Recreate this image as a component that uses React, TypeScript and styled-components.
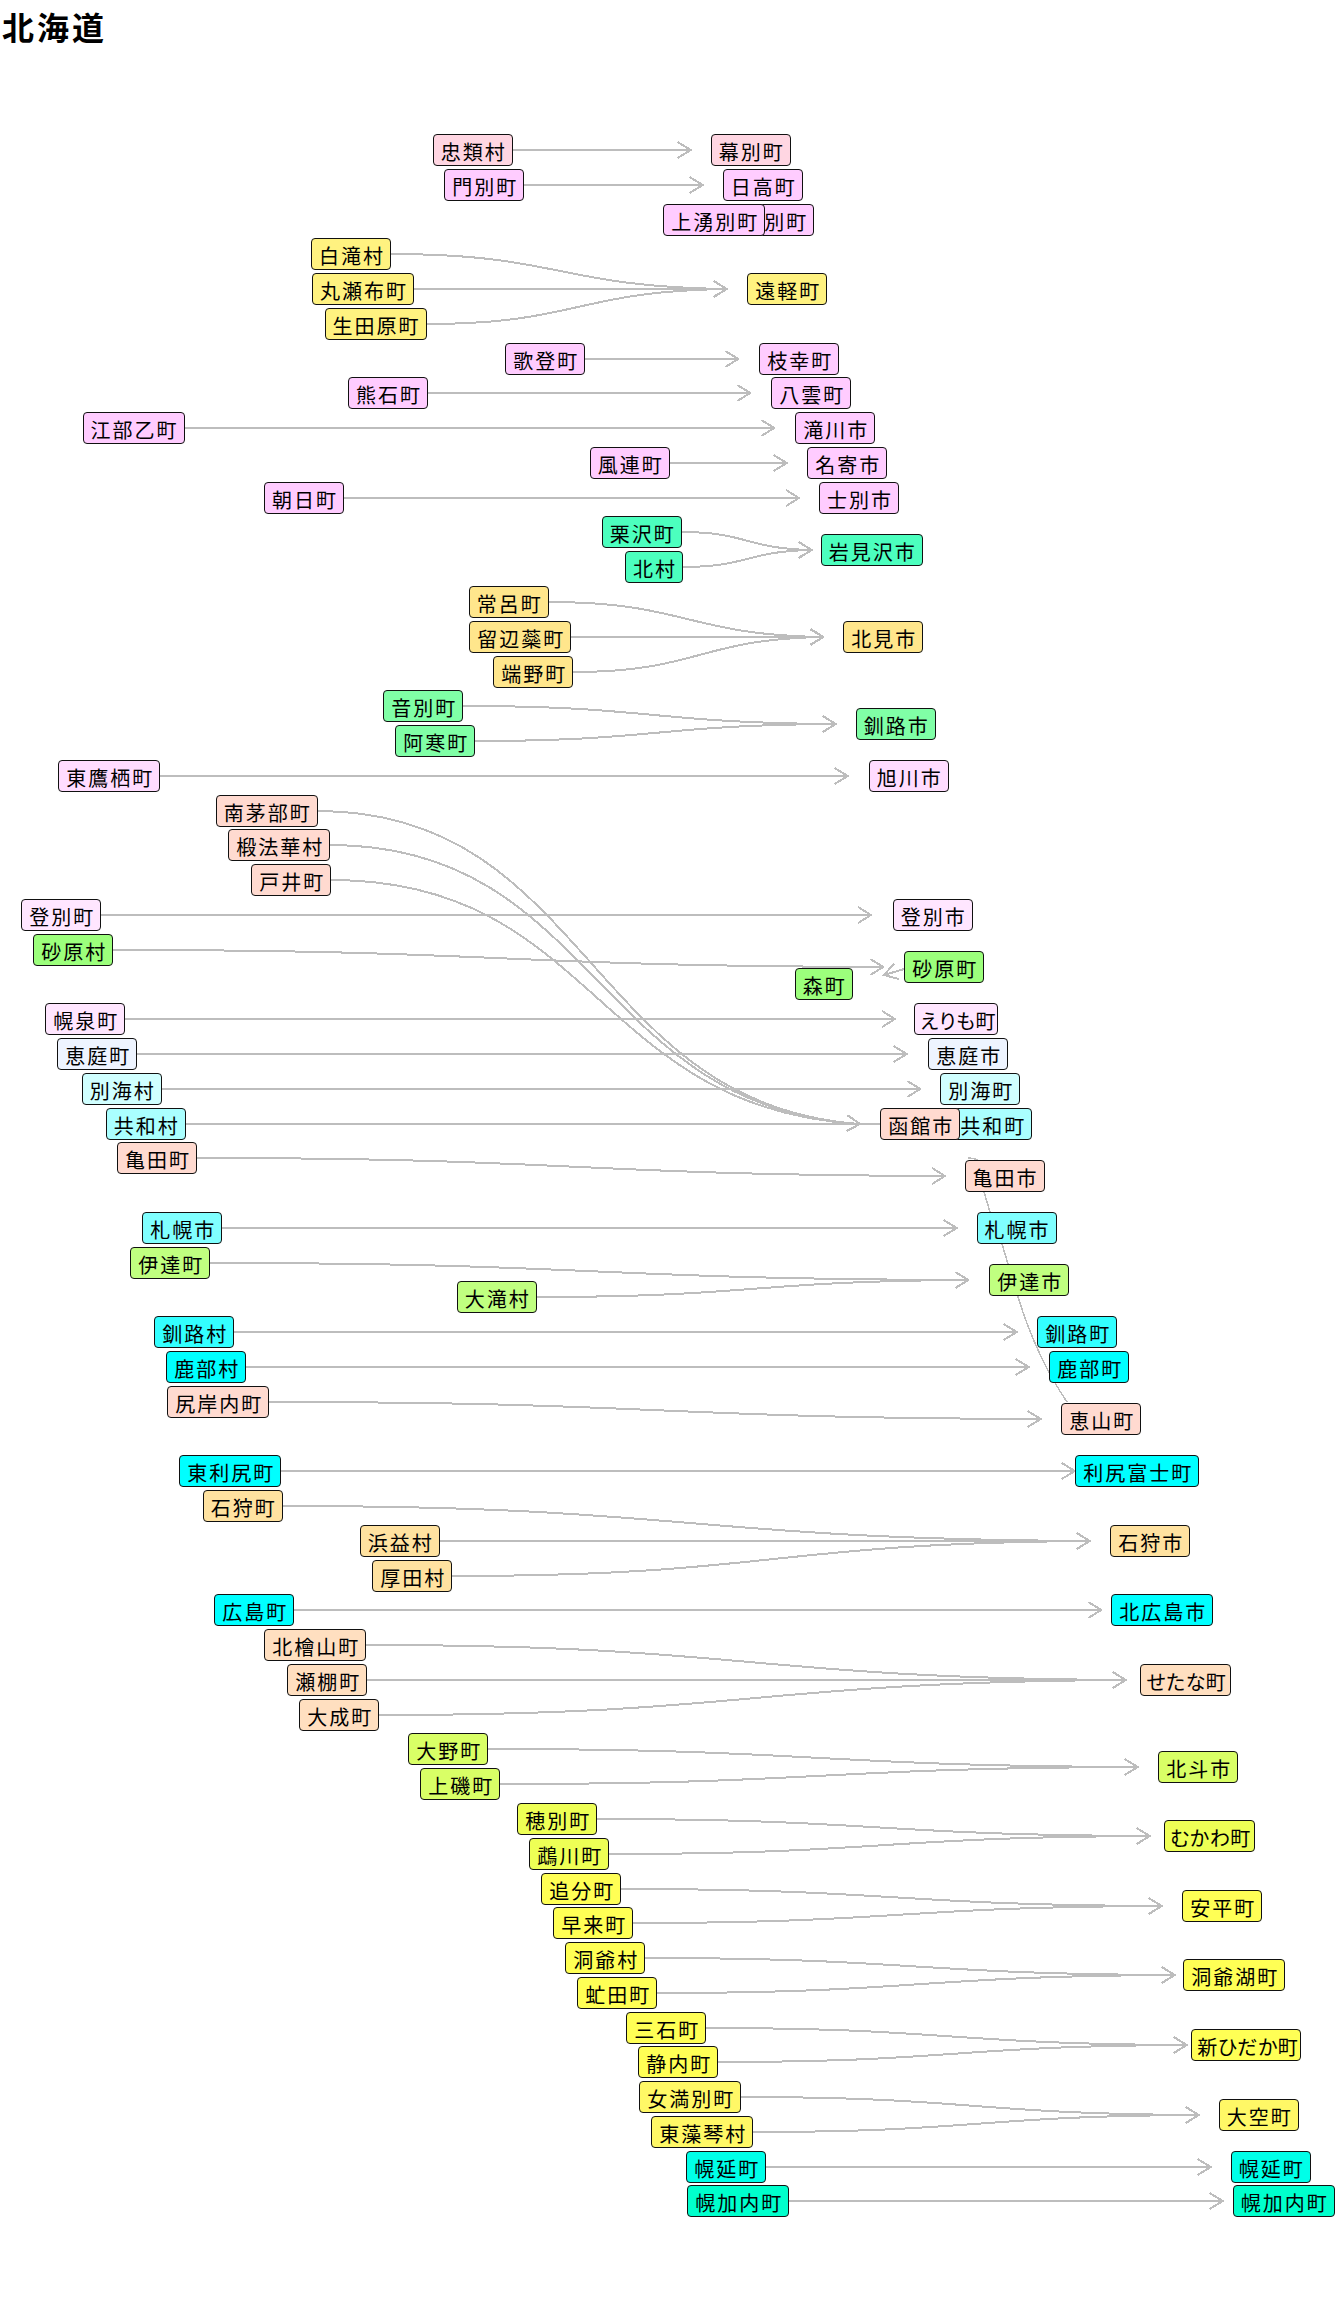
import React from 'react';
import styled, { createGlobalStyle } from 'styled-components';

const GlobalStyle = createGlobalStyle`
  html, body { margin: 0; padding: 0; background: #ffffff; }
  body { font-family: "Noto Sans CJK JP", "Noto Sans", sans-serif; }
`;

const ROW0 = 134;
const PITCH = 34.77;
const HEAD = 47;
const BOX_H = 32;

const C = {
  PINK: '#ffd6e2',
  MAG: '#ffccff',
  YEL1: '#fff280',
  GRN1: '#4cffbe',
  YEL2: '#ffe68c',
  GRN2: '#80ffa6',
  LAV: '#ffdcff',
  SAL: '#ffdad0',
  LAV2: '#ffe6ff',
  LGRN: '#9cff7c',
  ICE: '#eef4ff',
  LCY: '#d0ffff',
  CY2: '#aaffff',
  CY3: '#80ffff',
  YG: '#c0ff80',
  CY4: '#33ffff',
  CY: '#00ffff',
  TAN: '#ffe2a0',
  PEACH: '#ffdfc0',
  YG2: '#d9ff66',
  YG3: '#eeff55',
  YEL3: '#ffff55',
  YEL4: '#fff866',
  TEAL1: '#00ffe8',
  TEAL2: '#00ffcc',
};

type NodeDef = {
  id: string;
  label: string;
  x: number;
  row: number;
  color: string;
  w?: number;
  gap?: number;
  kana?: boolean;
};

const nodes: NodeDef[] = [
  { id: 'a1', label: '忠類村', x: 432.7, row: 0, color: C.PINK },
  { id: 'b1', label: '幕別町', x: 710.7, row: 0, color: C.PINK },
  { id: 'a2', label: '門別町', x: 444.3, row: 1, color: C.MAG },
  { id: 'b2', label: '日高町', x: 722.7, row: 1, color: C.MAG },
  { id: 'b3', label: '湧別町', x: 734.3, row: 2, color: C.MAG },
  { id: 'b3u', label: '上湧別町', x: 663.3, row: 2, color: C.MAG },
  { id: 'a4', label: '白滝村', x: 311, row: 3, color: C.YEL1 },
  { id: 'a5', label: '丸瀬布町', x: 312, row: 4, color: C.YEL1 },
  { id: 'a6', label: '生田原町', x: 324.5, row: 5, color: C.YEL1 },
  { id: 'b4', label: '遠軽町', x: 747.3, row: 4, color: C.YEL1, gap: 20.6 },
  { id: 'a7', label: '歌登町', x: 505.3, row: 6, color: C.MAG },
  { id: 'b7', label: '枝幸町', x: 759.3, row: 6, color: C.MAG, gap: 21 },
  { id: 'a8', label: '熊石町', x: 348, row: 7, color: C.MAG },
  { id: 'b8', label: '八雲町', x: 771.3, row: 7, color: C.MAG, gap: 21 },
  { id: 'a9', label: '江部乙町', x: 82.5, row: 8, color: C.MAG },
  { id: 'b9', label: '滝川市', x: 795.3, row: 8, color: C.MAG, gap: 21 },
  { id: 'a10', label: '風連町', x: 589.7, row: 9, color: C.MAG },
  { id: 'b10', label: '名寄市', x: 807.3, row: 9, color: C.MAG, gap: 20.6 },
  { id: 'a11', label: '朝日町', x: 264, row: 10, color: C.MAG },
  { id: 'b11', label: '士別市', x: 819, row: 10, color: C.MAG },
  { id: 'a12', label: '栗沢町', x: 601.7, row: 11, color: C.GRN1 },
  { id: 'a13', label: '北村', x: 625, row: 12, color: C.GRN1 },
  { id: 'b12', label: '岩見沢市', x: 820.7, row: 11.5, color: C.GRN1, gap: 9 },
  { id: 'a14', label: '常呂町', x: 468.7, row: 13, color: C.YEL2 },
  { id: 'a15', label: '留辺蘂町', x: 469.3, row: 14, color: C.YEL2 },
  { id: 'a16', label: '端野町', x: 493.3, row: 15, color: C.YEL2 },
  { id: 'b14', label: '北見市', x: 843.3, row: 14, color: C.YEL2 },
  { id: 'a17', label: '音別町', x: 383.3, row: 16, color: C.GRN2 },
  { id: 'a18', label: '阿寒町', x: 395.3, row: 17, color: C.GRN2 },
  { id: 'b17', label: '釧路市', x: 855.7, row: 16.5, color: C.GRN2 },
  { id: 'a19', label: '東鷹栖町', x: 58.3, row: 18, color: C.LAV },
  { id: 'b19', label: '旭川市', x: 868.7, row: 18, color: C.LAV, gap: 21 },
  { id: 'a20', label: '南茅部町', x: 215.7, row: 19, color: C.SAL },
  { id: 'a21', label: '椴法華村', x: 228.3, row: 20, color: C.SAL },
  { id: 'a22', label: '戸井町', x: 251.3, row: 21, color: C.SAL },
  { id: 'a23', label: '登別町', x: 21.3, row: 22, color: C.LAV2 },
  { id: 'b23', label: '登別市', x: 892.7, row: 22, color: C.LAV2, gap: 21.7 },
  { id: 'a24', label: '砂原村', x: 33.3, row: 23, color: C.LGRN },
  { id: 'b24', label: '砂原町', x: 904.3, row: 23.5, color: C.LGRN, gap: 21 },
  { id: 'mori', label: '森町', x: 794.7, row: 24, color: C.LGRN },
  { id: 'a25', label: '幌泉町', x: 45.3, row: 25, color: C.LAV2 },
  { id: 'b25', label: 'えりも町', x: 914.3, row: 25, color: C.LAV2, w: 84, gap: 19.3, kana: true },
  { id: 'a26', label: '恵庭町', x: 57.3, row: 26, color: C.ICE },
  { id: 'b26', label: '恵庭市', x: 928.3, row: 26, color: C.ICE, gap: 21.6 },
  { id: 'a27', label: '別海村', x: 81.7, row: 27, color: C.LCY },
  { id: 'b27', label: '別海町', x: 940.3, row: 27, color: C.LCY },
  { id: 'a28', label: '共和村', x: 105.7, row: 28, color: C.CY2 },
  { id: 'b28', label: '共和町', x: 952.3, row: 28, color: C.CY2 },
  { id: 'hako', label: '函館市', x: 880.3, row: 28, color: C.SAL, gap: 20.3 },
  { id: 'a29', label: '亀田町', x: 117, row: 29, color: C.SAL },
  { id: 'b29', label: '亀田市', x: 964.5, row: 29.5, color: C.SAL, gap: 19.5 },
  { id: 'a31', label: '札幌市', x: 142.3, row: 31, color: C.CY3 },
  { id: 'b31', label: '札幌市', x: 976.5, row: 31, color: C.CY3, gap: 19.8 },
  { id: 'a32', label: '伊達町', x: 130.3, row: 32, color: C.YG },
  { id: 'a33', label: '大滝村', x: 456.7, row: 33, color: C.YG },
  { id: 'b32', label: '伊達市', x: 989.3, row: 32.5, color: C.YG, gap: 21 },
  { id: 'a34', label: '釧路村', x: 154.3, row: 34, color: C.CY4 },
  { id: 'b34', label: '釧路町', x: 1037.3, row: 34, color: C.CY4, gap: 20.6 },
  { id: 'a35', label: '鹿部村', x: 166.3, row: 35, color: C.CY },
  { id: 'b35', label: '鹿部町', x: 1049.3, row: 35, color: C.CY, gap: 20.6 },
  { id: 'a36', label: '尻岸内町', x: 167.3, row: 36, color: C.SAL },
  { id: 'b36', label: '恵山町', x: 1061.3, row: 36.5, color: C.SAL, gap: 20.6 },
  { id: 'a38', label: '東利尻町', x: 179.3, row: 38, color: C.CY },
  { id: 'b38', label: '利尻富士町', x: 1075.3, row: 38, color: C.CY, gap: 0.5 },
  { id: 'a39', label: '石狩町', x: 202.7, row: 39, color: C.TAN },
  { id: 'a40', label: '浜益村', x: 359.7, row: 40, color: C.TAN },
  { id: 'a41', label: '厚田村', x: 372.3, row: 41, color: C.TAN },
  { id: 'b40', label: '石狩市', x: 1110.3, row: 40, color: C.TAN, gap: 20.6 },
  { id: 'a42', label: '広島町', x: 214.3, row: 42, color: C.CY },
  { id: 'b42', label: '北広島市', x: 1111.3, row: 42, color: C.CY, gap: 10 },
  { id: 'a43', label: '北檜山町', x: 264.3, row: 43, color: C.PEACH },
  { id: 'a44', label: '瀬棚町', x: 287.3, row: 44, color: C.PEACH },
  { id: 'a45', label: '大成町', x: 299.3, row: 45, color: C.PEACH },
  { id: 'b44', label: 'せたな町', x: 1140.3, row: 44, color: C.PEACH, w: 91, gap: 14.6, kana: true },
  { id: 'a46', label: '大野町', x: 408.3, row: 46, color: C.YG2 },
  { id: 'a47', label: '上磯町', x: 420.3, row: 47, color: C.YG2 },
  { id: 'b46', label: '北斗市', x: 1158.3, row: 46.5, color: C.YG2, gap: 20.6 },
  { id: 'a48', label: '穂別町', x: 517.3, row: 48, color: C.YG3 },
  { id: 'a49', label: '鵡川町', x: 529.3, row: 49, color: C.YG3 },
  { id: 'b48', label: 'むかわ町', x: 1164.3, row: 48.5, color: C.YG3, w: 91, gap: 14.6, kana: true },
  { id: 'a50', label: '追分町', x: 541.3, row: 50, color: C.YEL3 },
  { id: 'a51', label: '早来町', x: 553.3, row: 51, color: C.YEL3 },
  { id: 'b50', label: '安平町', x: 1182.3, row: 50.5, color: C.YEL3, gap: 20.6 },
  { id: 'a52', label: '洞爺村', x: 565.3, row: 52, color: C.YEL3 },
  { id: 'a53', label: '虻田町', x: 577.3, row: 53, color: C.YEL3 },
  { id: 'b52', label: '洞爺湖町', x: 1183.3, row: 52.5, color: C.YEL3, gap: 8.6 },
  { id: 'a54', label: '三石町', x: 626.3, row: 54, color: C.YEL3 },
  { id: 'a55', label: '静内町', x: 638.3, row: 55, color: C.YEL3 },
  { id: 'b54', label: '新ひだか町', x: 1191.3, row: 54.5, color: C.YEL3, w: 110, gap: 4.6, kana: true },
  { id: 'a56', label: '女満別町', x: 639.3, row: 56, color: C.YEL4 },
  { id: 'a57', label: '東藻琴村', x: 651.3, row: 57, color: C.YEL4 },
  { id: 'b56', label: '大空町', x: 1218.7, row: 56.5, color: C.YEL4 },
  { id: 'a58', label: '幌延町', x: 686.3, row: 58, color: C.TEAL1 },
  { id: 'b58', label: '幌延町', x: 1230.7, row: 58, color: C.TEAL1 },
  { id: 'a59', label: '幌加内町', x: 687.3, row: 59, color: C.TEAL2 },
  { id: 'b59', label: '幌加内町', x: 1232.7, row: 59, color: C.TEAL2, gap: 10 },
];

const edges: [string, string][] = [
  ['a1', 'b1'], ['a2', 'b2'],
  ['a4', 'b4'], ['a5', 'b4'], ['a6', 'b4'],
  ['a7', 'b7'], ['a8', 'b8'], ['a9', 'b9'], ['a10', 'b10'], ['a11', 'b11'],
  ['a12', 'b12'], ['a13', 'b12'],
  ['a14', 'b14'], ['a15', 'b14'], ['a16', 'b14'],
  ['a17', 'b17'], ['a18', 'b17'],
  ['a19', 'b19'],
  ['a20', 'hako'], ['a21', 'hako'], ['a22', 'hako'],
  ['a23', 'b23'], ['a24', 'b24'], ['a25', 'b25'], ['a26', 'b26'], ['a27', 'b27'], ['a28', 'b28'],
  ['a29', 'b29'], ['a31', 'b31'],
  ['a32', 'b32'], ['a33', 'b32'],
  ['a34', 'b34'], ['a35', 'b35'], ['a36', 'b36'], ['a38', 'b38'],
  ['a39', 'b40'], ['a40', 'b40'], ['a41', 'b40'],
  ['a42', 'b42'],
  ['a43', 'b44'], ['a44', 'b44'], ['a45', 'b44'],
  ['a46', 'b46'], ['a47', 'b46'],
  ['a48', 'b48'], ['a49', 'b48'],
  ['a50', 'b50'], ['a51', 'b50'],
  ['a52', 'b52'], ['a53', 'b52'],
  ['a54', 'b54'], ['a55', 'b54'],
  ['a56', 'b56'], ['a57', 'b56'],
  ['a58', 'b58'], ['a59', 'b59'],
];

const widthOf = (n: NodeDef) => n.w ?? 14 + 22 * Array.from(n.label).length;
const topOf = (n: NodeDef) => ROW0 + PITCH * n.row - HEAD;

const byId: Record<string, NodeDef> = {};
nodes.forEach((n) => { byId[n.id] = n; });

const r1 = (v: number) => Math.round(v * 10) / 10;

function arrowHead(tx: number, ty: number, ang: number) {
  const back = 13;
  const half = 8;
  const ux = Math.cos(ang);
  const uy = Math.sin(ang);
  const nx = -uy;
  const ny = ux;
  const p1x = tx - back * ux + half * nx;
  const p1y = ty - back * uy + half * ny;
  const p2x = tx - back * ux - half * nx;
  const p2y = ty - back * uy - half * ny;
  return `M${r1(p1x)} ${r1(p1y)} L${r1(tx)} ${r1(ty)} L${r1(p2x)} ${r1(p2y)}`;
}

function edgePaths(s: NodeDef, t: NodeDef) {
  const x1 = s.x + widthOf(s);
  const y1 = Math.round(topOf(s) + BOX_H / 2);
  const x2 = t.x - (t.gap ?? 20);
  const y2 = Math.round(topOf(t) + BOX_H / 2);
  if (Math.abs(y2 - y1) < 0.5) {
    return { line: `M${r1(x1)} ${y1} L${r1(x2)} ${y2}`, head: arrowHead(x2, y2, 0) };
  }
  const dx = x2 - x1;
  const c1x = x1 + dx * 0.5;
  const c1y = y1;
  const c2x = x2 - dx * 0.5;
  const c2y = y2 - (y2 - y1) * 0.06;
  const ang = Math.atan2(y2 - c2y, x2 - c2x);
  return {
    line: `M${r1(x1)} ${y1} C${r1(c1x)} ${r1(c1y)} ${r1(c2x)} ${r1(c2y)} ${r1(x2)} ${y2}`,
    head: arrowHead(x2, y2, ang),
  };
}

const Page = styled.div`
  width: 1344px;
  min-height: 2304px;
  display: flex;
  flex-direction: column;
  background: #ffffff;
`;

const Title = styled.h1`
  margin: 0;
  padding: 7px 0 2px 2px;
  height: 38px;
  font-family: "Noto Sans CJK JP", "Noto Sans", sans-serif;
  font-size: 32px;
  line-height: 38px;
  font-weight: 700;
  letter-spacing: 3px;
  color: #000000;
`;

const Canvas = styled.div`
  position: relative;
  flex: none;
  width: 1344px;
  height: 2257px;
`;

const EdgeLayer = styled.svg`
  position: absolute;
  left: 0;
  top: 0;
  overflow: visible;
`;

const Node = styled.div<{ $bg: string }>`
  position: absolute;
  display: flex;
  box-sizing: border-box;
  height: ${BOX_H}px;
  padding: 2px 0 0 7px;
  border: 1px solid #111111;
  border-radius: 4px;
  background: ${(p) => p.$bg};
  color: #000000;
  font-family: "Noto Sans CJK JP", "Noto Sans", sans-serif;
  font-size: 20px;
  line-height: 29px;
  letter-spacing: 2px;
  white-space: nowrap;
  overflow: hidden;
`;

const Kana = styled.span`
  font-feature-settings: "palt";
  letter-spacing: 0.5px;
  margin-left: -2px;
`;

const Suffix = styled.span`
  margin-left: auto;
  padding-right: 5px;
  letter-spacing: 0;
`;

const LINE = '#bdbdbd';

export default function App() {
  const paths = edges.map(([s, t]) => edgePaths(byId[s], byId[t]));

  const moriSrcX = byId.b24.x;
  const moriY = Math.round(topOf(byId.b24) + 18);
  const moriTipX = 884;
  const moriTipY = moriY + 6;
  const moriAng = Math.atan2(moriTipY - moriY, moriTipX - moriSrcX);

  const eY = (y: number) => y - HEAD;

  return (
    <>
      <GlobalStyle />
      <Page>
        <Title>北海道</Title>
        <Canvas>
          <EdgeLayer width={1344} height={2257} viewBox="0 0 1344 2257">
            <g fill="none" stroke={LINE} strokeWidth={2} shapeRendering="crispEdges">
              {paths.map((p, i) => (
                <React.Fragment key={i}>
                  <path d={p.line} />
                  <path d={p.head} />
                </React.Fragment>
              ))}
              <path d={`M${moriSrcX} ${moriY} L${moriTipX} ${moriTipY}`} />
              <path d={arrowHead(moriTipX, moriTipY, moriAng)} />
            </g>
            <path
              d={`M1067 ${eY(1402)} C1044 ${eY(1368)} 1030 ${eY(1336)} 1018 ${eY(1297)} L1002 ${eY(1244)} L990 ${eY(1212)} L984 ${eY(1192)} L982 ${eY(1165)} Q980 ${eY(1158)} 968 ${eY(1158)}`}
              fill="none"
              stroke={LINE}
              strokeWidth={1.5}
              shapeRendering="crispEdges"
            />
          </EdgeLayer>
          {nodes.map((n) => (
            <Node
              key={n.id}
              $bg={n.color}
              style={{ left: n.x, top: topOf(n), width: widthOf(n) }}
            >
              {n.kana ? (
                <>
                  <Kana>{n.label.slice(0, -1)}</Kana>
                  <Suffix>{n.label.slice(-1)}</Suffix>
                </>
              ) : (
                n.label
              )}
            </Node>
          ))}
        </Canvas>
      </Page>
    </>
  );
}
